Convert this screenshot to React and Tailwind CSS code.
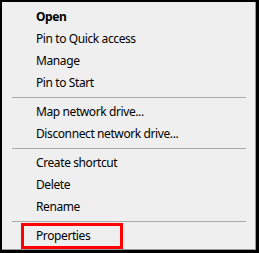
import React from "react";

const Item = ({ children, bold, boxed }) => (
  <div className="h-[22px] flex items-center pl-[34px] relative">
    <span className={bold ? "font-bold" : ""}>{children}</span>
    {boxed && (
      <div className="absolute left-[19px] top-[-2px] w-[102px] h-[26px] border-[3px] border-[#ff0000]" />
    )}
  </div>
);

const Sep = () => (
  <div className="h-[7px] flex items-center pl-[10px] pr-[9px]">
    <div className="h-px w-full bg-[#a9a9a9]" />
  </div>
);

export default function App() {
  return (
    <div className="w-[259px] h-[253px] bg-black pt-[2px] pl-[2px] pr-[3px] pb-[3px]">
      <div
        className="w-full h-full bg-[#efefef] border-r border-b border-[#9a9a9a] pt-[4px] text-[12px] tracking-[-0.4px] text-black"
        style={{ fontFamily: '"Segoe UI", "Noto Sans", "Open Sans", sans-serif' }}
      >
        <Item bold>Open</Item>
        <Item>Pin to Quick access</Item>
        <Item>Manage</Item>
        <Item>Pin to Start</Item>
        <Sep />
        <Item>Map network drive...</Item>
        <Item>Disconnect network drive...</Item>
        <Sep />
        <Item>Create shortcut</Item>
        <Item>Delete</Item>
        <Item>Rename</Item>
        <Sep />
        <Item boxed>Properties</Item>
      </div>
    </div>
  );
}
